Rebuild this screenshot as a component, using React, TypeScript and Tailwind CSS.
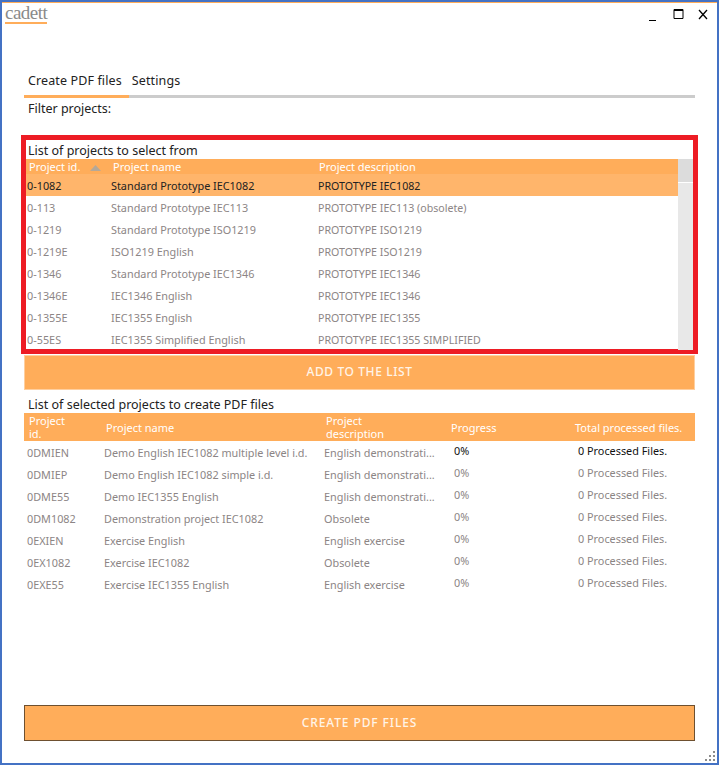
const font = { fontFamily: '"Noto Sans", "Open Sans", sans-serif' };

const sourceRows = [
  ['0-1082', 'Standard Prototype IEC1082', 'PROTOTYPE IEC1082'],
  ['0-113', 'Standard Prototype IEC113', 'PROTOTYPE IEC113 (obsolete)'],
  ['0-1219', 'Standard Prototype ISO1219', 'PROTOTYPE ISO1219'],
  ['0-1219E', 'ISO1219 English', 'PROTOTYPE ISO1219'],
  ['0-1346', 'Standard Prototype IEC1346', 'PROTOTYPE IEC1346'],
  ['0-1346E', 'IEC1346 English', 'PROTOTYPE IEC1346'],
  ['0-1355E', 'IEC1355 English', 'PROTOTYPE IEC1355'],
  ['0-55ES', 'IEC1355 Simplified English', 'PROTOTYPE IEC1355 SIMPLIFIED'],
];

const selectedRows = [
  ['0DMIEN', 'Demo English IEC1082 multiple level i.d.', 'English demonstrati...'],
  ['0DMIEP', 'Demo English IEC1082 simple i.d.', 'English demonstrati...'],
  ['0DME55', 'Demo IEC1355 English', 'English demonstrati...'],
  ['0DM1082', 'Demonstration project IEC1082', 'Obsolete'],
  ['0EXIEN', 'Exercise English', 'English exercise'],
  ['0EX1082', 'Exercise IEC1082', 'Obsolete'],
  ['0EXE55', 'Exercise IEC1355 English', 'English exercise'],
];

const App = () => {
  return (
    <div style={font} className="relative flex h-[765px] w-[719px] flex-col overflow-hidden border-2 border-[#4472c4] bg-white text-[10.85px] text-[#8c8585]">
      <div className="h-px w-full bg-[#ffad5a]" />
      <div className="flex h-[25px] items-start justify-between pl-[3px] pr-[9px]">
        <div className="mt-[1px] border-b-2 border-[#ffad5a] text-[19px] leading-[18px] tracking-[-0.5px] text-[#8a8a8a]" style={{ fontFamily: '"Liberation Serif", serif' }}>
          cadett
        </div>
        <div className="flex items-start">
          <svg width="9" height="12" viewBox="0 0 9 12" className="mt-[6px]"><path d="M1 12h7" stroke="#000" strokeWidth="2" /></svg>
          <svg width="11" height="11" viewBox="0 0 11 11" className="ml-[16px] mt-[6px]" fill="none"><path d="M1 .5h9v9H1z" stroke="#000" /><path d="M1 1.5h9" stroke="#000" /></svg>
          <svg width="10" height="11" viewBox="0 0 10 11" className="ml-[14px] mt-[6px]" fill="none"><path d="M1 1l8 9M9 1l-8 9" stroke="#000" strokeWidth="1.3" /></svg>
        </div>
      </div>

      <div className="flex flex-1 flex-col pl-[22px] pr-[22px] pb-[22px]">
        <div className="mt-[43px] flex h-[24px] items-start gap-[10px] pl-[4px] text-[12.5px] leading-[20px] tracking-[0.12px] text-[#222]">
          <span>Create PDF files</span>
          <span>Settings</span>
        </div>
        <div className="flex h-[3px] bg-[#cccccc]">
          <div className="w-[105px] bg-[#ffad5a]" />
        </div>
        <div className="h-[20px] pl-[4px] text-[12.5px] leading-[21px] text-[#222]">Filter projects:</div>

        <div className="-mx-[3px] mt-[17px] h-[219px] border-[5px] border-[#ed1c24]">
          <div className="h-[19px] pl-[2px] text-[12.5px] leading-[22px] text-[#222]">List of projects to select from</div>
          <div className="flex">
            <div className="flex-1">
              <div className="flex h-[15px] items-center bg-[#ffad5a] pt-[2px] text-[11px] text-white">
                <div className="flex w-[81px] items-center justify-between pl-[3px] pr-[6px]">
                  <span>Project id.</span>
                  <svg width="11" height="6" viewBox="0 0 11 6"><path d="M5.5 0L11 6H0z" fill="#b5a898" /></svg>
                </div>
                <div className="w-[206px] pl-[6px]">Project name</div>
                <div className="pl-[6px]">Project description</div>
              </div>
              {sourceRows.map((row, i) => (
                <div key={row[0]} className={`flex h-[22px] items-center pt-[2px] ${i === 0 ? 'bg-[#ffb56b] text-[#222]' : ''}`}>
                  <div className="w-[85px] pl-[1px]">{row[0]}</div>
                  <div className="w-[207px]">{row[1]}</div>
                  <div className="pt-px text-[10.65px]">{row[2]}</div>
                </div>
              ))}
            </div>
            <div className="w-[15px]">
              <div className="h-[24px] border-b border-white bg-[#dcdcdc]" />
              <div className="h-[167px] bg-[#e8e8e8]" />
            </div>
          </div>
        </div>

        <div className="mt-px flex h-[35px] items-center justify-center border border-[#ffcf9f] bg-[#ffad5a] pb-[2px] text-[12px] font-medium tracking-[0.6px] text-[#fff4e8]">
          ADD TO THE LIST
        </div>

        <div className="mt-[5px] h-[18px] pl-[4px] text-[12.5px] leading-[20px] text-[#222]">List of selected projects to create PDF files</div>
        <div className="flex h-[28px] items-center bg-[#ffad5a] text-[11px] leading-[13px] text-white">
          <div className="w-[82px] pl-[5px]"><div className="w-[50px]">Project id.</div></div>
          <div className="w-[220px]">Project name</div>
          <div className="w-[125px]"><div className="w-[80px]">Project description</div></div>
          <div className="w-[124px]">Progress</div>
          <div>Total processed files.</div>
        </div>
        <div className="pt-px">
          {selectedRows.map((row, i) => (
            <div key={row[0]} className="flex h-[22px] items-center">
              <div className="w-[80px] pl-[3px]">{row[0]}</div>
              <div className="w-[220px]">{row[1]}</div>
              <div className="w-[130px]">{row[2]}</div>
              <div className={`-mt-[4px] w-[124px] ${i === 0 ? 'text-[#111]' : ''}`}>0%</div>
              <div className={`-mt-[4px] ${i === 0 ? 'text-[#111]' : ''}`}>0 Processed Files.</div>
            </div>
          ))}
        </div>

        <div className="mt-auto flex h-[36px] items-center justify-center border border-[#6e5030] bg-[#ffad5a] text-[12px] font-medium tracking-[0.9px] text-[#fff4e8]">
          CREATE PDF FILES
        </div>
      </div>

      <svg width="11" height="11" viewBox="0 0 11 11" className="absolute bottom-[1px] right-[1px]" fill="#8c8c8c">
        <rect x="8" y="0" width="2" height="2" />
        <rect x="4" y="4" width="2" height="2" />
        <rect x="8" y="4" width="2" height="2" />
        <rect x="0" y="8" width="2" height="2" />
        <rect x="4" y="8" width="2" height="2" />
        <rect x="8" y="8" width="2" height="2" />
      </svg>
    </div>
  );
};

export default App;
